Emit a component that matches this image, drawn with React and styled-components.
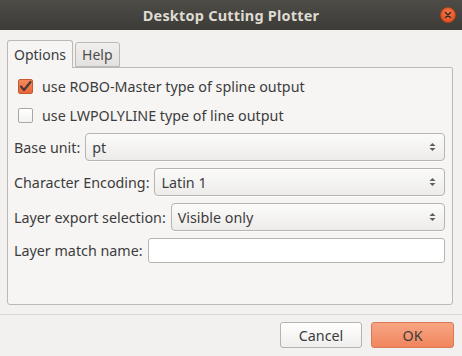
import React, { useState } from 'react';
import styled, { createGlobalStyle } from 'styled-components';

const GlobalStyle = createGlobalStyle`
  html, body {
    margin: 0;
    padding: 0;
    background: #f2f1f0;
  }
  * {
    box-sizing: border-box;
  }
`

const Window = styled.div`
  width: 462px;
  height: 356px;
  display: flex;
  flex-direction: column;
  background: #f2f1f0;
  font-family: "Noto Sans", "DejaVu Sans", sans-serif;
  font-size: 14.3px;
  color: #3c3c3c;
  overflow: hidden;
`

const TitleBar = styled.div`
  height: 30px;
  flex-shrink: 0;
  position: relative;
  display: flex;
  align-items: center;
  justify-content: center;
  background: linear-gradient(#4d4c47, #3c3b37);
  color: #dfdbd2;
  font-weight: bold;
  font-size: 14.5px;
  letter-spacing: 0.2px;
`

const CloseButton = styled.div`
  position: absolute;
  right: 6px;
  top: 7px;
  width: 16px;
  height: 16px;
  border-radius: 50%;
  background: radial-gradient(circle at 50% 35%, #f37a4c, #dd4814);
  border: 1px solid #b8401a;
  display: flex;
  align-items: center;
  justify-content: center;
`

const Body = styled.div`
  flex: 1;
  display: flex;
  flex-direction: column;
`

const Notebook = styled.div`
  margin: 10px 9px 0 7px;
  display: flex;
  flex-direction: column;
`

const TabRow = styled.div`
  display: flex;
  align-items: flex-end;
  gap: 2px;
  height: 27px;
  position: relative;
  z-index: 1;
`

const Tab = styled.div`
  height: ${p => (p.$active ? '28px' : '25px')};
  margin-bottom: ${p => (p.$active ? '-1px' : '0')};
  padding: 0 6px;
  display: flex;
  align-items: center;
  justify-content: center;
  border: 1px solid #bcb9b4;
  border-bottom: ${p => (p.$active ? 'none' : '1px solid #bcb9b4')};
  border-radius: 3px 3px 0 0;
  background: ${p => (p.$active ? '#f6f5f4' : 'linear-gradient(#f0efee, #e4e2e0)')};
  color: ${p => (p.$active ? '#3c3c3c' : '#4c4c4c')};
  font-size: 14px;
  padding-bottom: ${p => (p.$active ? '1px' : '0')};
`

const Pane = styled.div`
  height: 238px;
  border: 1px solid #bcb9b4;
  border-radius: 0 2px 3px 3px;
  background: #f6f5f4;
  padding: 4px 7px 0 6px;
  display: flex;
  flex-direction: column;
`

const CheckRow = styled.label`
  display: flex;
  align-items: center;
  gap: 9px;
  height: 29px;
  padding-left: 4px;
`

const Box = styled.span`
  width: 15px;
  height: 15px;
  flex-shrink: 0;
  border-radius: 2px;
  border: 1px solid ${p => (p.$checked ? '#c65a2e' : '#aaa7a2')};
  background: ${p => (p.$checked ? 'linear-gradient(#f48a5c, #e8663a)' : 'linear-gradient(#ffffff, #f3f2f1)')};
  display: flex;
  align-items: center;
  justify-content: center;
`

const Fields = styled.div`
  display: flex;
  flex-direction: column;
  gap: 7px;
  margin-top: 3px;
`

const FieldRow = styled.div`
  display: flex;
  align-items: center;
  gap: 5px;
`

const Label = styled.span`
  white-space: nowrap;
`

const Combo = styled.div`
  flex: 1;
  height: 28px;
  border: 1px solid #b8b5b0;
  border-radius: 4px;
  background: linear-gradient(#fbfbfa, #edecea);
  display: flex;
  align-items: center;
  justify-content: space-between;
  padding: 0 8px 0 6px;
  box-shadow: 0 1px 0 rgba(255, 255, 255, 0.6);
`

const Entry = styled.input`
  flex: 1;
  height: 25px;
  border: 1px solid #b8b5b0;
  border-radius: 3px;
  background: #ffffff;
  font: inherit;
  color: inherit;
  padding: 0 6px;
  outline: none;
  min-width: 0;
`

const Separator = styled.div`
  height: 1px;
  background: #dad7d3;
  margin-top: 9px;
`

const ButtonRow = styled.div`
  display: flex;
  justify-content: flex-end;
  gap: 9px;
  padding: 7px 8px 0 0;
`

const Button = styled.button`
  width: ${p => p.$width}px;
  height: 26px;
  border-radius: 3px;
  font: inherit;
  font-size: 14.3px;
  color: #3c3c3c;
  border: 1px solid ${p => (p.$primary ? '#d87a55' : '#b6b3ae')};
  background: ${p => (p.$primary ? 'linear-gradient(#f8a684, #f0855d)' : 'linear-gradient(#ffffff, #efeeec)')};
  padding: 0;
`

function Arrows() {
  return (
    <svg width="7" height="12" viewBox="0 0 7 12">
      <path d="M3.5 2 L6.5 5 L0.5 5 Z" fill="#5e5e5e" />
      <path d="M3.5 10 L6.5 7 L0.5 7 Z" fill="#5e5e5e" />
    </svg>
  );
}

function Check() {
  return (
    <svg width="13" height="13" viewBox="0 0 13 13">
      <path d="M2 6.5 L5 10 L11.5 2" fill="none" stroke="#4a3a33" strokeWidth="2.2" strokeLinecap="round" strokeLinejoin="round" />
    </svg>
  );
}

export default function App() {
  const [robo, setRobo] = useState(true);
  const [lwpoly, setLwpoly] = useState(false);

  return (
    <Window>
      <GlobalStyle />
      <TitleBar>
        Desktop Cutting Plotter
        <CloseButton>
          <svg width="8" height="8" viewBox="0 0 8 8">
            <path d="M1.5 1.5 L6.5 6.5 M6.5 1.5 L1.5 6.5" stroke="#3a2a22" strokeWidth="1.5" strokeLinecap="round" />
          </svg>
        </CloseButton>
      </TitleBar>
      <Body>
        <Notebook>
          <TabRow>
            <Tab $active>Options</Tab>
            <Tab>Help</Tab>
          </TabRow>
          <Pane>
            <CheckRow onClick={() => setRobo(!robo)}>
              <Box $checked={robo}>{robo && <Check />}</Box>
              use ROBO-Master type of spline output
            </CheckRow>
            <CheckRow onClick={() => setLwpoly(!lwpoly)}>
              <Box $checked={lwpoly}>{lwpoly && <Check />}</Box>
              use LWPOLYLINE type of line output
            </CheckRow>
            <Fields>
              <FieldRow>
                <Label>Base unit:</Label>
                <Combo>pt<Arrows /></Combo>
              </FieldRow>
              <FieldRow>
                <Label>Character Encoding:</Label>
                <Combo>Latin 1<Arrows /></Combo>
              </FieldRow>
              <FieldRow>
                <Label>Layer export selection:</Label>
                <Combo>Visible only<Arrows /></Combo>
              </FieldRow>
              <FieldRow>
                <Label>Layer match name:</Label>
                <Entry defaultValue="" />
              </FieldRow>
            </Fields>
          </Pane>
        </Notebook>
        <Separator />
        <ButtonRow>
          <Button $width={82}>Cancel</Button>
          <Button $width={83} $primary>OK</Button>
        </ButtonRow>
      </Body>
    </Window>
  );
}
